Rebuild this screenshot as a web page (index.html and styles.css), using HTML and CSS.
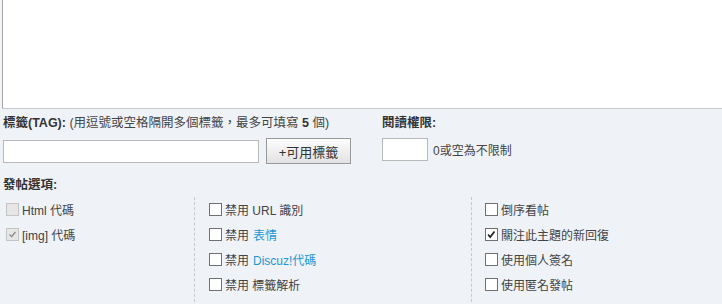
FILE: index.html
```
<!DOCTYPE html>
<html lang="zh-TW">
<head>
    <meta charset="UTF-8">
    <title>發表帖子</title>
    <link rel="stylesheet" href="styles.css">
</head>
<body>
    <div class="editor"></div>

    <div class="meta">
        <div class="tag-box">
            <div class="label"><b>標籤(TAG):</b> (用逗號或空格隔開多個標籤，最多可填寫 <b>5</b> 個)</div>
            <div class="field-row">
                <input type="text" class="tag-input">
                <button class="btn">+可用標籤</button>
            </div>
        </div>
        <div class="perm-box">
            <div class="label"><b>閱讀權限:</b></div>
            <div class="field-row">
                <input type="text" class="perm-input">
                <span class="hint">0或空為不限制</span>
            </div>
        </div>
    </div>

    <div class="label opts-title"><b>發帖選項:</b></div>
    <div class="opts">
        <div class="col">
            <div class="opt"><span class="cb disabled"></span>Html 代碼</div>
            <div class="opt"><span class="cb disabled checked"><svg viewBox="0 0 13 13"><path d="M3 6.5 L5.5 9 L10 3.5" fill="none" stroke="#8a8a8a" stroke-width="1.6"/></svg></span>[img] 代碼</div>
        </div>
        <div class="col">
            <div class="opt"><span class="cb"></span>禁用 URL 識別</div>
            <div class="opt"><span class="cb"></span>禁用 <a href="#">表情</a></div>
            <div class="opt"><span class="cb"></span>禁用 <a href="#">Discuz!代碼</a></div>
            <div class="opt"><span class="cb"></span>禁用 標籤解析</div>
        </div>
        <div class="col">
            <div class="opt"><span class="cb"></span>倒序看帖</div>
            <div class="opt"><span class="cb checked"><svg viewBox="0 0 13 13"><path d="M2.5 6.5 L5 9.5 L10 3" fill="none" stroke="#222" stroke-width="2"/></svg></span>關注此主題的新回復</div>
            <div class="opt"><span class="cb"></span>使用個人簽名</div>
            <div class="opt"><span class="cb"></span>使用匿名發帖</div>
        </div>
    </div>
</body>
</html>
```

FILE: styles.css
```
* {
    margin: 0;
    padding: 0;
    box-sizing: border-box;
}

body {
    background-color: #eff2f7;
    color: #333;
    font-family: "Liberation Sans", "Noto Sans CJK TC", sans-serif;
    font-size: 12px;
    overflow: hidden;
}

.editor {
    height: 109px;
    margin-left: 2px;
    background-color: #fff;
    border-left: 1px solid #a8a8a8;
    border-bottom: 1px solid #c9c9c9;
}

.label {
    line-height: 16px;
    font-size: 12.5px;
    color: #444;
}

.label b {
    color: #333;
}

.meta {
    display: flex;
    padding: 6px 0 0 3px;
}

.tag-box {
    width: 379px;
}

.field-row {
    display: flex;
    align-items: center;
    margin-top: 7px;
}

input {
    height: 23px;
    border: 1px solid #b8b8b8;
    background-color: #fff;
    outline: none;
}

.tag-input {
    width: 256px;
}

.perm-input {
    width: 46px;
}

.btn {
    height: 26px;
    width: 85px;
    margin-left: 7px;
    font-family: inherit;
    font-size: 13px;
    color: #333;
    border: 1px solid #999;
    background: linear-gradient(#fdfdfd, #e2e2e2);
}

.hint {
    margin-left: 5px;
    font-size: 12px;
    color: #444;
}

.opts-title {
    margin: 13px 0 0 3px;
}

.opts {
    display: grid;
    grid-template-columns: 194px 277px 1fr;
    margin-top: 4px;
}

.col {
    padding-left: 14px;
    border-left: 1px dashed #c8c8c8;
    min-height: 110px;
}

.col:first-child {
    padding-left: 6px;
    border-left: none;
}

.col:last-child {
    padding-left: 13px;
}

.opt {
    display: flex;
    align-items: center;
    height: 25px;
    color: #444;
}

.opt a {
    color: #1d97d4;
    text-decoration: none;
    margin-left: 4px;
}

.cb {
    width: 13px;
    height: 13px;
    margin-right: 3px;
    border: 1px solid #707070;
    background-color: #fff;
    flex-shrink: 0;
}

.cb svg {
    display: block;
    width: 11px;
    height: 11px;
}

.cb.disabled {
    border-color: #c4c4c4;
    background-color: #e6e6e6;
}
```
